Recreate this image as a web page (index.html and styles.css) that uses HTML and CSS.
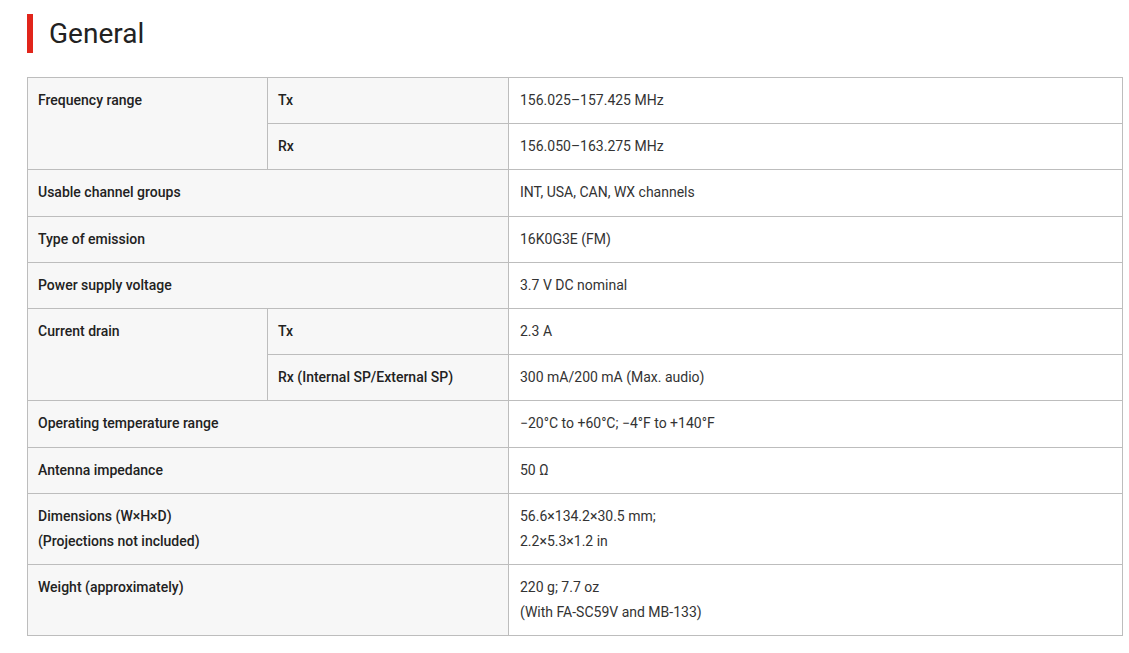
FILE: index.html
```html
<!DOCTYPE html>
<html lang="en">
<head>
<meta charset="utf-8">
<title>General</title>
<link rel="stylesheet" href="styles.css">
</head>
<body>
<section class="spec">
  <h2 class="spec-title">General</h2>
  <table class="spec-table">
    <colgroup>
      <col class="c1"><col class="c2"><col class="c3">
    </colgroup>
    <tbody>
      <tr>
        <th rowspan="2">Frequency range</th>
        <th>Tx</th>
        <td>156.025–157.425 MHz</td>
      </tr>
      <tr>
        <th>Rx</th>
        <td>156.050–163.275 MHz</td>
      </tr>
      <tr>
        <th colspan="2">Usable channel groups</th>
        <td>INT, USA, CAN, WX channels</td>
      </tr>
      <tr>
        <th colspan="2">Type of emission</th>
        <td>16K0G3E (FM)</td>
      </tr>
      <tr>
        <th colspan="2">Power supply voltage</th>
        <td>3.7 V DC nominal</td>
      </tr>
      <tr>
        <th rowspan="2">Current drain</th>
        <th>Tx</th>
        <td>2.3 A</td>
      </tr>
      <tr>
        <th>Rx (Internal SP/External SP)</th>
        <td>300 mA/200 mA (Max. audio)</td>
      </tr>
      <tr>
        <th colspan="2">Operating temperature range</th>
        <td>−20°C to +60°C; −4°F to +140°F</td>
      </tr>
      <tr>
        <th colspan="2">Antenna impedance</th>
        <td>50 Ω</td>
      </tr>
      <tr>
        <th colspan="2">Dimensions (W×H×D)<br>(Projections not included)</th>
        <td>56.6×134.2×30.5 mm;<br>2.2×5.3×1.2 in</td>
      </tr>
      <tr>
        <th colspan="2">Weight (approximately)</th>
        <td>220 g; 7.7 oz<br>(With FA-SC59V and MB-133)</td>
      </tr>
    </tbody>
  </table>
</section>
</body>
</html>
```
FILE: styles.css
```css
html, body {
  margin: 0;
  padding: 0;
  background: #ffffff;
}

body {
  font-family: Roboto, "Liberation Sans", Arial, sans-serif;
  color: #222222;
}

.spec {
  padding: 14px 6px 0 27px;
}

.spec-title {
  margin: 0;
  border-left: 6px solid #e1251b;
  padding-left: 16px;
  font-size: 28px;
  font-weight: 400;
  line-height: 39px;
  height: 39px;
  color: #222222;
}

.spec-table {
  margin-top: 24px;
  width: 100%;
  border-collapse: collapse;
  table-layout: fixed;
  font-size: 14px;
  line-height: 1.8;
}

.c1 { width: 240px; }
.c2 { width: 241px; }

.spec-table th,
.spec-table td {
  border: 1px solid #bdbdbd;
  padding: 10px;
  text-align: left;
  vertical-align: top;
}

.spec-table th {
  background: #f7f7f7;
  font-weight: 500;
  color: #222222;
}

.spec-table td {
  background: #ffffff;
  font-weight: 400;
  color: #333333;
  padding-left: 11px;
}
```
